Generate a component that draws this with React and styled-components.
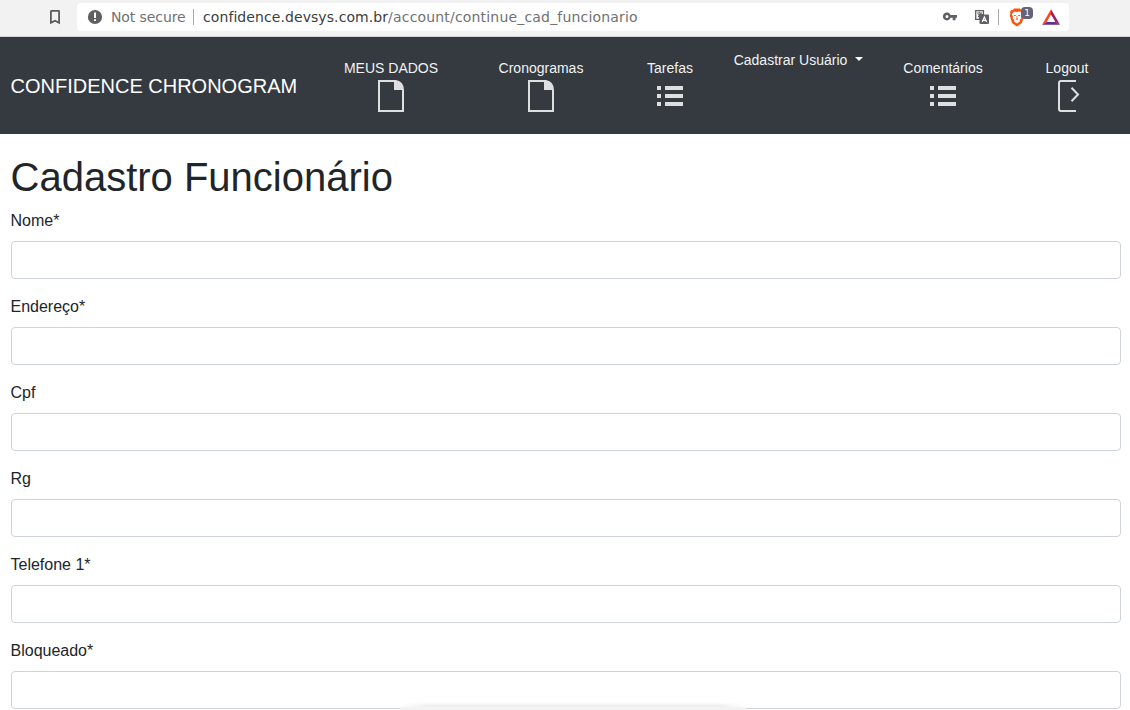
import React from "react";
import styled, { createGlobalStyle } from "styled-components";

const GlobalStyle = createGlobalStyle`
  *, *::before, *::after { box-sizing: border-box; }
  body {
    margin: 0;
    background: #fff;
    color: #212529;
    font: 400 16px/1.5 "Liberation Sans", Arial, sans-serif;
    overflow: hidden;
  }
  svg { display: block; flex: none; }
`;

const Page = styled.div`
  position: relative;
  height: 710px;
  overflow: hidden;
`;

const BrowserBar = styled.div`
  display: flex;
  align-items: flex-start;
  height: 37px;
  padding: 3px 61px 0 47px;
  background: #f2f2f2;
  border-bottom: 1px solid #d3d3d4;
`;

const BookmarkSlot = styled.div`
  width: 30px;
  padding-top: 6px;
`;

const AddressField = styled.div`
  display: flex;
  align-items: center;
  flex: 1;
  height: 28px;
  padding: 0 9px 0 10px;
  border-radius: 4px;
  background: #fff;
  color: #707173;
  font: 14px/28px "DejaVu Sans", sans-serif;
  white-space: nowrap;
`;

const Security = styled.span`
  width: 82px;
  margin-left: 8px;
  letter-spacing: -0.1px;
`;

const Divider = styled.span`
  width: 1px;
  height: 16px;
  background: #a9aaac;
`;

const Url = styled.span`
  flex: 1;
  margin-left: 9px;
  letter-spacing: 0.18px;
`;

const Domain = styled.span`
  color: #3c3d40;
  letter-spacing: 0.08px;
`;

const Actions = styled.div`
  display: flex;
  align-items: center;
  height: 28px;
`;

const Gap = styled.span`
  width: ${(p) => p.$w}px;
`;

const ShieldButton = styled.span`
  position: relative;
  width: 26px;
`;

const Count = styled.span`
  position: absolute;
  top: -1px;
  left: 12px;
  width: 12px;
  height: 12px;
  border-radius: 4px;
  background: #636475;
  color: #fff;
  font: 9px/12px "DejaVu Sans", sans-serif;
  text-align: center;
`;

const Navbar = styled.nav`
  display: flex;
  align-items: center;
  height: 97px;
  padding: 0 9px 0 10.5px;
  background: #343a40;
  color: #fff;
`;

const Brand = styled.span`
  width: 305.5px;
  font-size: 20px;
  line-height: 30px;
  white-space: nowrap;
`;

const NavItem = styled.div`
  display: flex;
  flex-direction: column;
  align-items: center;
  align-self: flex-start;
  width: ${(p) => p.$w}px;
  padding-top: ${(p) => (p.$menu ? 13 : 21)}px;
  font-size: 14px;
  line-height: 21px;
  color: #f1f2f2;
  white-space: nowrap;
`;

const NavLabel = styled.span`
  display: flex;
  align-items: center;
  height: 21px;
  margin-bottom: 1px;
`;

const Caret = styled.span`
  margin: -4px 0 0 8px;
  border: 4px solid transparent;
  border-top-color: #fff;
  border-bottom: 0;
`;

const Content = styled.main`
  padding: 19px 9px 0 10.5px;
`;

const Title = styled.h1`
  margin: 0 0 8px;
  font-size: 40px;
  font-weight: 400;
  line-height: 48px;
`;

const Field = styled.div`
  margin-bottom: 16px;
`;

const Label = styled.label`
  display: block;
  height: 24px;
  margin-bottom: 8px;
`;

const Input = styled.input`
  display: block;
  width: 100%;
  height: 38px;
  padding: 6px 12px;
  border: 1px solid #ced4da;
  border-radius: 4px;
  background: #fff;
  font: inherit;
`;

const StatusEdge = styled.div`
  position: absolute;
  left: 400px;
  bottom: 0;
  width: 346px;
  height: 8px;
  border-bottom: 3px solid #f3f3f3;
  background:
    linear-gradient(90deg, #fff, #fff0 28px, #fff0 318px, #fff),
    linear-gradient(#fff, #f7f7f7 40%, #efefef 70%, #efefef);
  background-clip: padding-box;
`;

const BookmarkIcon = () => (
  <svg width="16" height="16" viewBox="0 0 16 16" fill="none" stroke="#5a5b5e" strokeWidth="1.8">
    <path d="M3.9 2.4Q3.9 1.9 4.4 1.9H11.6Q12.1 1.9 12.1 2.4V13.7L8 11.7L3.9 13.7Z" />
  </svg>
);

const AlertIcon = () => (
  <svg width="16" height="16" viewBox="0 0 16 16">
    <circle cx="8" cy="8" r="7.1" fill="#5f6063" />
    <path d="M7 3.6H9V9H7ZM7 10.2H9V12.1H7Z" fill="#fff" />
  </svg>
);

const KeyIcon = () => (
  <svg width="16" height="16" viewBox="0 0 16 16" fill="#5f6063">
    <path fillRule="evenodd" d="M8.6 6A4 4 0 1 0 8.6 8.8H10.7V11.2H13.5V8.8H15V6ZM5 5.9A1.5 1.5 0 1 1 5 8.9A1.5 1.5 0 0 1 5 5.9Z" />
  </svg>
);

const TranslateIcon = () => (
  <svg width="16" height="16" viewBox="0 0 16 16" fill="none">
    <path d="M1.7 1.7H9.4V5.7H5.5V10.3H1.7Z" stroke="#5f6063" strokeWidth="1.3" />
    <path d="M3.1 4H8M5.4 2.7V4M4 7.8Q6.9 6.8 7.1 4M4 5.2Q4.7 7 7.2 7.8" stroke="#5f6063" />
    <rect x="5.5" y="5.5" width="9.5" height="9.5" rx="1" fill="#5f6063" />
    <path d="M8.2 12.9L10.4 8L12.6 12.9M9 11.4H11.8" stroke="#fff" strokeWidth="1.2" />
  </svg>
);

const ShieldIcon = () => (
  <svg width="16" height="19" viewBox="0 0 16 19">
    <path d="M5 .6H11L12.3 2.1L14 2L15 4L14.6 5.8L15.2 7.5L13.2 14.2Q12.8 15.4 8 18.5Q3.2 15.4 2.8 14.2L.8 7.5L1.4 5.8L1 4L2 2L3.7 2.1Z" fill="#fb5410" />
    <path d="M4.8 3.5L8 4L11.2 3.5L13.2 6.3L12 8.7L12.3 10.4L10.6 12L11 13.4L8 15.6L5 13.4L5.4 12L3.7 10.4L4 8.7L2.8 6.3Z" fill="#fff" />
    <path d="M4.5 7H6.8V8H5.2ZM11.5 7H9.2V8H10.8ZM7.6 8H8.4V10.6L9.5 11.1L8 12.1L6.5 11.1L7.6 10.6Z" fill="#fb5410" />
  </svg>
);

const TriangleIcon = () => (
  <svg width="18" height="16" viewBox="0 0 18 16">
    <path d="M9 .2L0 15.8L4.6 12.9L9 5.4Z" fill="#ff4724" />
    <path d="M9 .2L18 15.8L13.4 12.9L9 5.4Z" fill="#9e1f63" />
    <path d="M0 15.8H18L13.4 12.9H4.6Z" fill="#662d91" />
  </svg>
);

const FileIcon = () => (
  <svg width="32" height="32" viewBox="0 0 32 32">
    <path d="M3 0H21Q29 1.5 29 10V32H3ZM5 2V30H27V10H19V2Z" fill="#dedfe0" fillRule="evenodd" />
  </svg>
);

const ListIcon = () => (
  <svg width="32" height="32" viewBox="0 0 32 32" fill="#dedfe0">
    <path d="M3 6H7V10H3ZM11 6H29V10H11ZM3 14H7V18H3ZM11 14H29V18H11ZM3 22H7V26H3ZM11 22H29V26H11Z" />
  </svg>
);

const LogoutIcon = () => (
  <svg width="32" height="32" viewBox="0 0 32 32" fill="none" stroke="#dedfe0" strokeWidth="2">
    <path d="M25 1H10Q8 1 8 3V29Q8 31 10 31H25" />
    <path d="M20.5 7.7L27 14.5L20.5 21.3" />
  </svg>
);

const navItems = [
  { label: "MEUS DADOS", width: 150, icon: FileIcon },
  { label: "Cronogramas", width: 150, icon: FileIcon },
  { label: "Tarefas", width: 108, icon: ListIcon },
  { label: "Cadastrar Usuário", width: 149, menu: true },
  { label: "Comentários", width: 140, icon: ListIcon },
  { label: "Logout", width: 108, icon: LogoutIcon },
];

const fields = ["Nome*", "Endereço*", "Cpf", "Rg", "Telefone 1*", "Bloqueado*"];

export default function App() {
  return (
    <Page>
      <GlobalStyle />
      <BrowserBar>
        <BookmarkSlot><BookmarkIcon /></BookmarkSlot>
        <AddressField>
          <AlertIcon />
          <Security>Not secure</Security>
          <Divider />
          <Url><Domain>confidence.devsys.com.br</Domain>/account/continue_cad_funcionario</Url>
          <Actions>
            <KeyIcon />
            <Gap $w={16} />
            <TranslateIcon />
            <Gap $w={8} />
            <Divider />
            <Gap $w={10} />
            <ShieldButton><ShieldIcon /><Count>1</Count></ShieldButton>
            <Gap $w={7} />
            <TriangleIcon />
          </Actions>
        </AddressField>
      </BrowserBar>
      <Navbar>
        <Brand>CONFIDENCE CHRONOGRAM</Brand>
        {navItems.map(({ label, width, icon: Icon, menu }) => (
          <NavItem key={label} $w={width} $menu={menu}>
            <NavLabel>{label}{menu && <Caret />}</NavLabel>
            {Icon && <Icon />}
          </NavItem>
        ))}
      </Navbar>
      <Content>
        <Title>Cadastro Funcionário</Title>
        {fields.map((name, i) => (
          <Field key={name}>
            <Label htmlFor={`field-${i}`}>{name}</Label>
            <Input id={`field-${i}`} />
          </Field>
        ))}
      </Content>
      <StatusEdge />
    </Page>
  );
}
